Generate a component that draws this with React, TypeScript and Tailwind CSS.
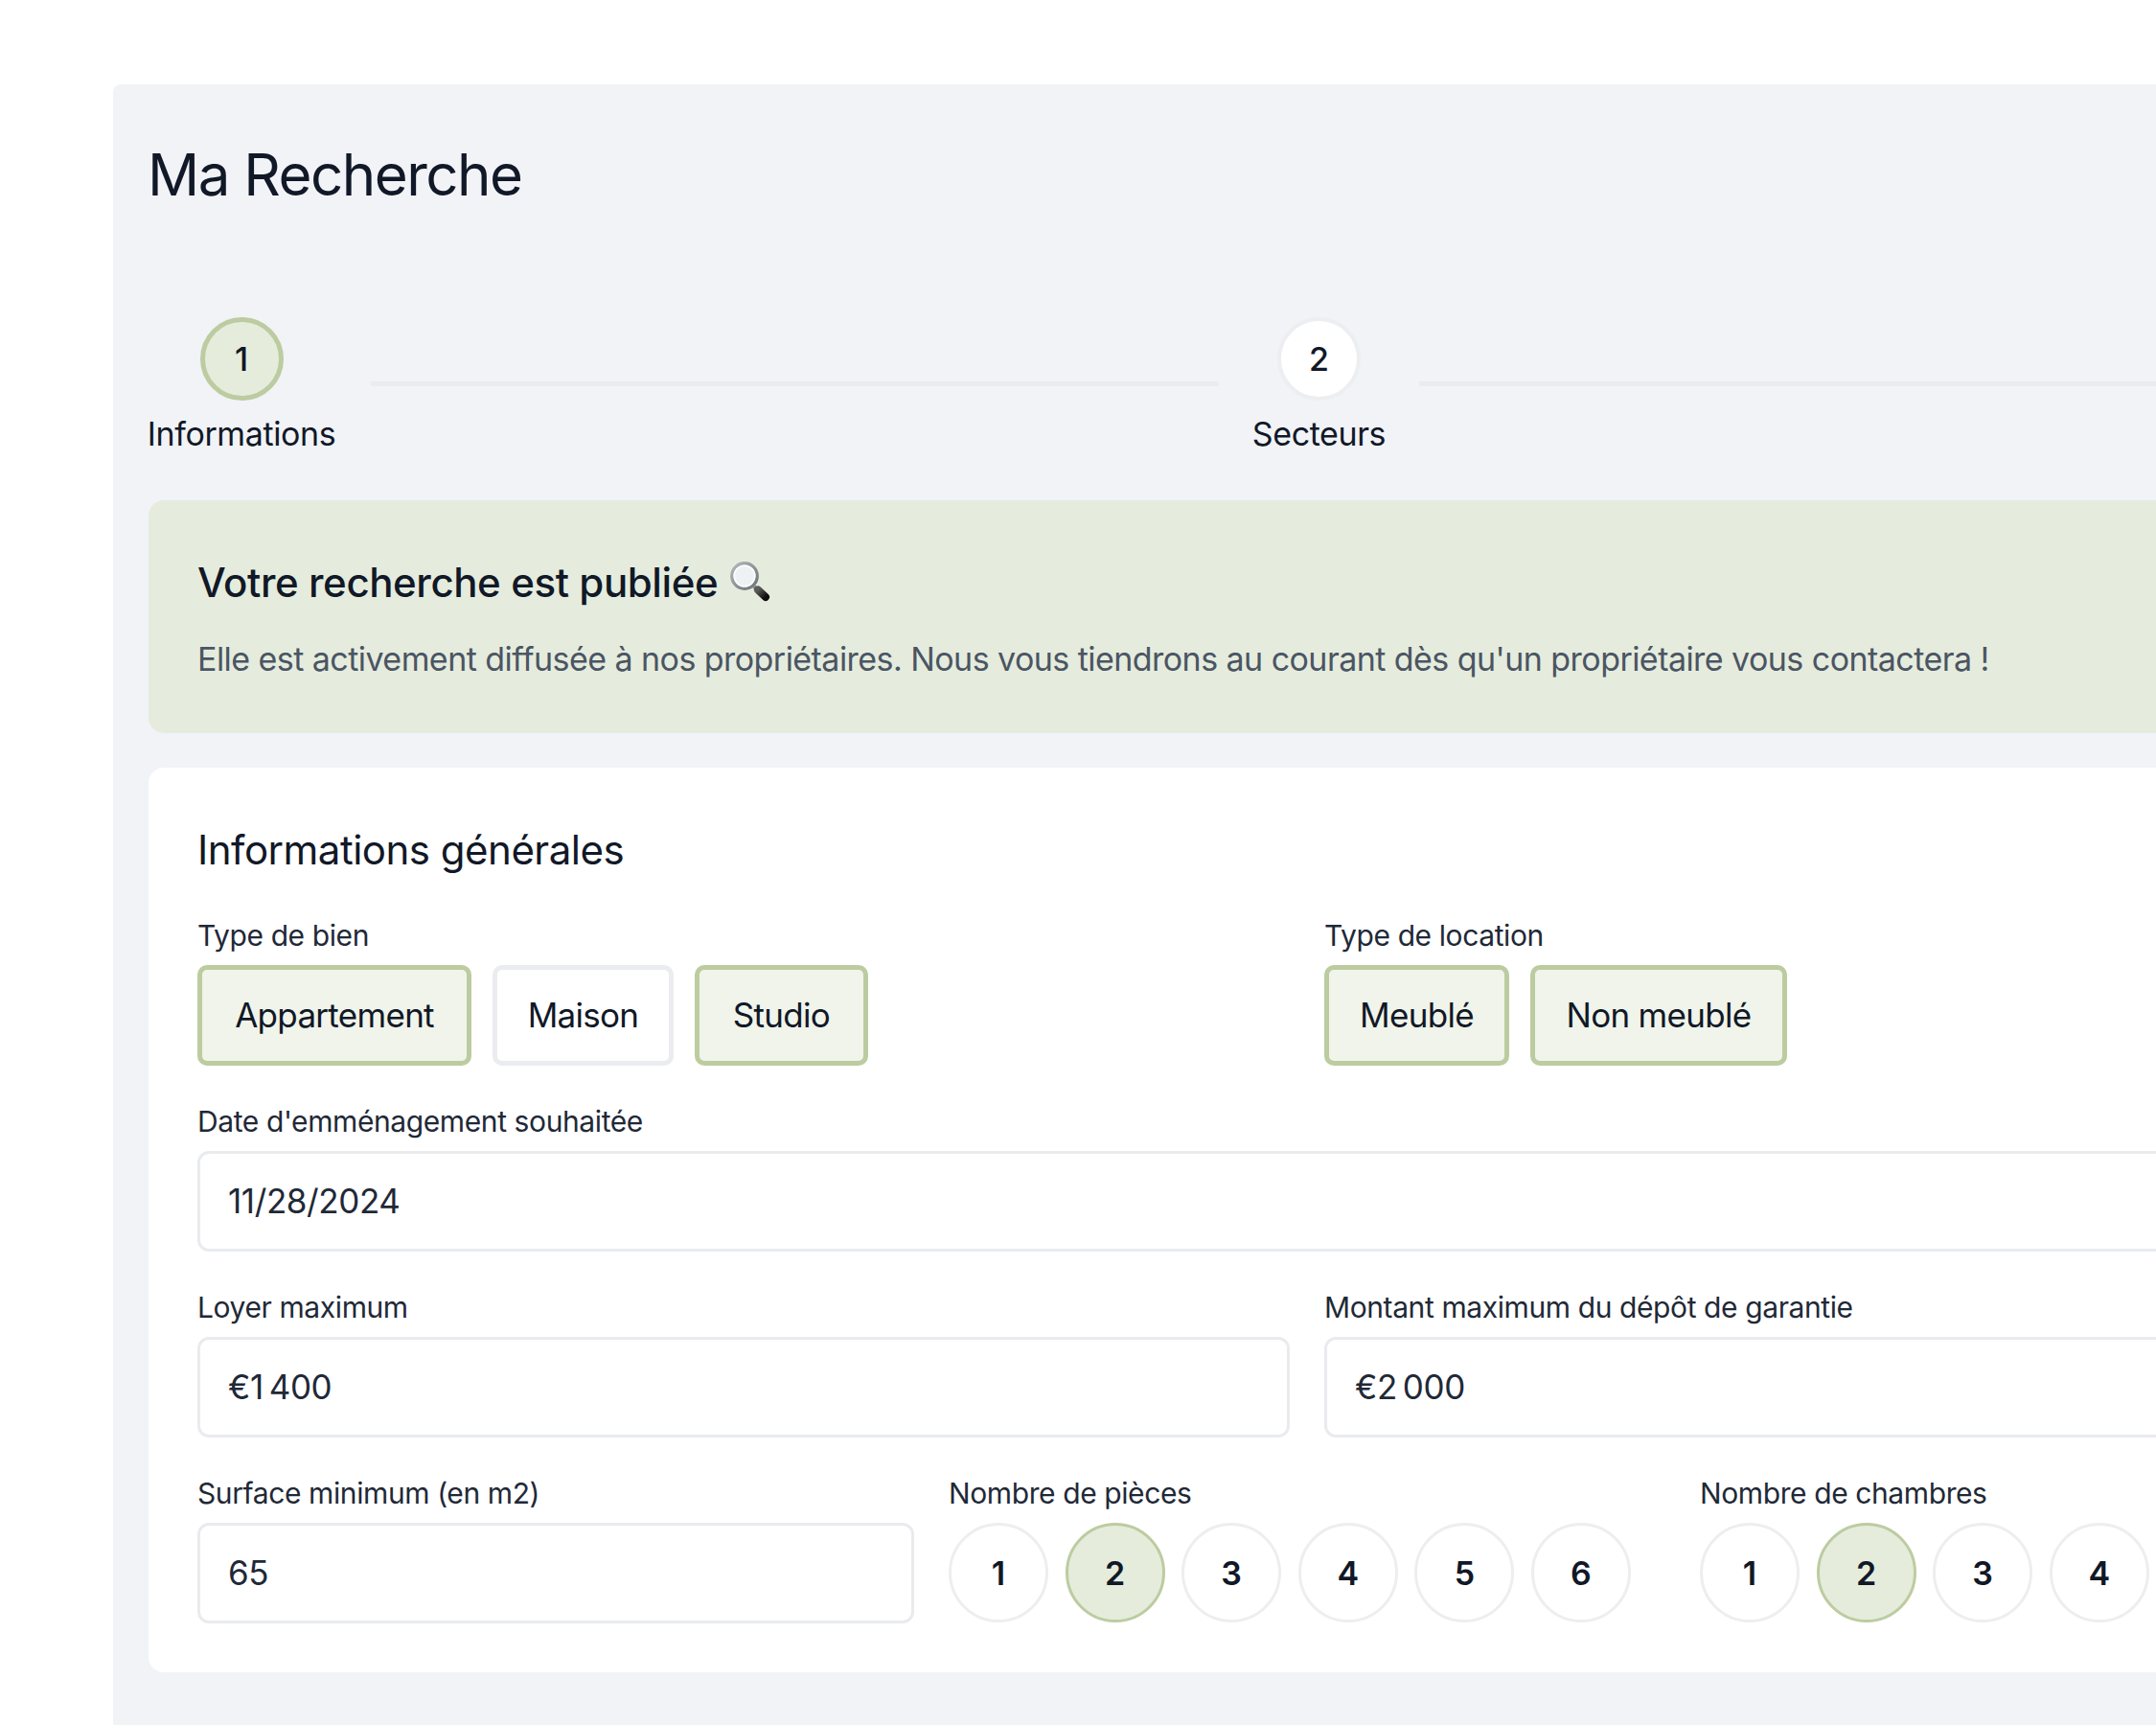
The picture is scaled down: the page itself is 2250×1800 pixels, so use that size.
import React from "react";

const font = { fontFamily: '"Inter", "Liberation Sans", sans-serif' };

function Label({ children }: { children: React.ReactNode }) {
  return <div className="mb-[7px] flex h-[48px] w-fit items-center text-[30px] font-normal text-[#1f2937] tracking-[-0.4px]">{children}</div>;
}

function Chip({ text, on, w }: { text: string; on?: boolean; w: string }) {
  return (
    <button
      className={`${w} flex h-[105px] items-center justify-center rounded-[10px] border-[5px] text-[35px] tracking-[-0.7px] text-[#111827] ${
        on ? "border-[#bccca0] bg-[#f0f4ea]" : "border-[#eaecef] bg-white"
      }`}
    >
      {text}
    </button>
  );
}

function Field({ value }: { value: string }) {
  return (
    <div className="flex h-[105px] w-full items-center rounded-[12px] border-[3px] border-[#e9ebee] bg-white pl-[29px] text-[35px] tracking-[-0.4px] text-[#1f2937]">
      <span>{value}</span>
    </div>
  );
}

function Round({ n, on }: { n: number; on?: boolean }) {
  return (
    <div
      className={`flex h-[104px] w-[104px] shrink-0 items-center justify-center rounded-full border-[3px] text-[34px] font-semibold text-[#111827] ${
        on ? "border-[#bccca0] bg-[#e5ecdc]" : "border-[#eceef0] bg-white"
      }`}
    >
      {n}
    </div>
  );
}

function Rounds({ count }: { count: number }) {
  return (
    <div className="flex gap-[17.6px]">
      {Array.from({ length: count }, (_, i) => (
        <Round key={i} n={i + 1} on={i === 1} />
      ))}
    </div>
  );
}

function Step({ n, label, on, w }: { n: number; label: string; on?: boolean; w: string }) {
  return (
    <div className={`${w} flex shrink-0 flex-col items-center`}>
      <div
        className={`flex h-[87px] w-[87px] items-center justify-center rounded-full text-[34px] font-medium text-[#111827] ${
          on ? "border-[5px] border-[#bccca0] bg-[#e5ecdc]" : "border-[4px] border-[#eceef0] bg-white"
        }`}
      >
        {n}
      </div>
      <div className="mt-[8px] flex h-[52px] items-center whitespace-nowrap text-[34px] tracking-[-0.4px] text-[#111827]">{label}</div>
    </div>
  );
}

function Magnifier() {
  return (
    <svg viewBox="0 0 44 44" className="ml-[12px] h-[44px] w-[44px] shrink-0">
      <defs>
        <linearGradient id="handle" x1="0" y1="0" x2="1" y2="1">
          <stop offset="0" stopColor="#5a5a5a" />
          <stop offset="1" stopColor="#0e0e0e" />
        </linearGradient>
        <linearGradient id="rim" x1="0" y1="0" x2="1" y2="1">
          <stop offset="0" stopColor="#b5b8bb" />
          <stop offset="1" stopColor="#6d7276" />
        </linearGradient>
      </defs>
      <line x1="26" y1="27" x2="30" y2="31" stroke="#7d8286" strokeWidth="4" />
      <line x1="30" y1="30.5" x2="38" y2="38" stroke="url(#handle)" strokeWidth="8" strokeLinecap="round" />
      <circle cx="16" cy="16" r="13.2" fill="#eef2f5" stroke="url(#rim)" strokeWidth="3.4" />
      <circle cx="16" cy="16" r="10.8" fill="none" stroke="#ffffff" strokeWidth="1.4" />
    </svg>
  );
}

export default function App() {
  return (
    <div className="h-[1800px] w-[2250px] overflow-hidden bg-white pl-[118px] pt-[88px]" style={font}>
      <div className="h-[1712px] w-[2493px] rounded-tl-[8px] bg-[#f1f3f7] pl-[37px] pr-[37px]">
        <h1 className="-ml-[1px] flex h-[188px] items-center text-[60px] font-normal tracking-[-1.5px] text-[#111827]">
          Ma Recherche
        </h1>
        <div className="mt-[55px] -ml-[1px] flex h-[148px] gap-[36px]">
          <Step n={1} label="Informations" on w="w-[196px]" />
          <div className="mt-[67px] ml-[1px] -mr-[1px] h-[5px] w-[885px] bg-[#e9ebee]" />
          <Step n={2} label="Secteurs" w="w-[139px]" />
          <div className="mt-[67px] -ml-[1px] h-[5px] flex-1 bg-[#e9ebee]" />
        </div>

        <section className="mt-[43px] h-[243px] rounded-[16px] bg-[#e5ecdd] pb-[52px] pt-[51px] pl-[51px] pr-[52px]">
          <h2 className="flex h-[68px] items-center text-[42px] font-[450] tracking-[-0.4px] text-[#111827]">
            Votre recherche est publiée
            <Magnifier />
          </h2>
          <p className="mt-[21px] flex h-[50px] items-center text-[34px] tracking-[-0.55px] text-[#4b5563]">
            Elle est activement diffusée à nos propriétaires. Nous vous tiendrons au courant dès qu'un propriétaire vous contactera !
          </p>
        </section>

        <section className="mt-[36px] flex h-[944px] flex-col gap-[34px] rounded-[16px] bg-white py-[52px] pl-[51px] pr-[52px]">
          <h2 className="mt-[2px] flex h-[66px] items-center text-[42px] font-normal tracking-[-0.5px] text-[#111827]">
            Informations générales
          </h2>
          <div className="grid grid-cols-2 gap-[36px]">
            <div>
              <Label>Type de bien</Label>
              <div className="flex gap-[22px]">
                <Chip text="Appartement" on w="w-[286px]" />
                <Chip text="Maison" w="w-[189px]" />
                <Chip text="Studio" on w="w-[181px]" />
              </div>
            </div>
            <div>
              <Label>Type de location</Label>
              <div className="flex gap-[22px]">
                <Chip text="Meublé" on w="w-[193px]" />
                <Chip text="Non meublé" on w="w-[268px]" />
              </div>
            </div>
          </div>
          <div>
            <Label>Date d'emménagement souhaitée</Label>
            <Field value="11/28/2024" />
          </div>
          <div className="grid grid-cols-2 gap-[36px]">
            <div>
              <Label>Loyer maximum</Label>
              <Field value={"€1\u2009400"} />
            </div>
            <div>
              <Label>Montant maximum du dépôt de garantie</Label>
              <Field value={"€2\u2009000"} />
            </div>
          </div>
          <div className="grid grid-cols-3 gap-[36px]">
            <div>
              <Label>Surface minimum (en m2)</Label>
              <Field value="65" />
            </div>
            <div>
              <Label>Nombre de pièces</Label>
              <Rounds count={6} />
            </div>
            <div>
              <Label>Nombre de chambres</Label>
              <Rounds count={4} />
            </div>
          </div>
        </section>
      </div>
    </div>
  );
}
